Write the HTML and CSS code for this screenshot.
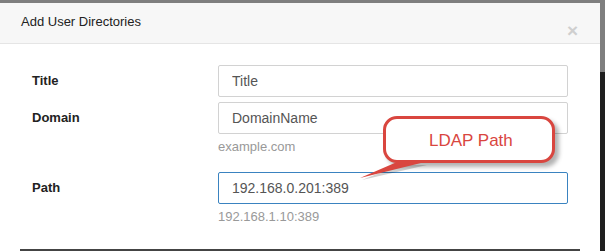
FILE: index.html
```html
<!DOCTYPE html>
<html lang="en">
<head>
  <meta charset="UTF-8">
  <title>Add User Directories</title>
  <link rel="stylesheet" href="styles.css">
</head>
<body>
  <!-- Modal dialog -->
  <div class="modal">
    <div class="modal-header">
      <h4 class="modal-title">Add User Directories</h4>
      <span class="close">&times;</span>
    </div>

    <div class="modal-body">
      <div class="form-row">
        <label class="form-label">Title</label>
        <div class="form-field">
          <input class="form-input" type="text" placeholder="Title">
        </div>
      </div>

      <div class="form-row">
        <label class="form-label">Domain</label>
        <div class="form-field">
          <input class="form-input" type="text" placeholder="DomainName">
          <span class="help">example.com</span>
        </div>
      </div>

      <div class="form-row path-row">
        <label class="form-label">Path</label>
        <div class="form-field">
          <input class="form-input focused" type="text" value="192.168.0.201:389">
          <span class="help">192.168.1.10:389</span>
        </div>
      </div>
    </div>

    <div class="modal-footer-line"></div>

    <!-- Annotation bubble over the form -->
    <div class="callout">LDAP Path</div>
    <svg class="callout-tail" width="80" height="26" viewBox="0 0 80 26">
      <polygon points="7,23 44,8 72,8" fill="rgba(0,0,0,0.18)" />
      <polygon points="5,21 42,5 70,5" fill="#d9463f" />
    </svg>
  </div>

  <!-- Backdrop strip on the right -->
  <div class="backdrop-side">
    <div class="side-top"></div>
    <div class="side-bottom"></div>
  </div>
</body>
</html>
```

FILE: styles.css
```css
* {
  margin: 0;
  padding: 0;
  box-sizing: border-box;
}

body {
  font-family: 'Liberation Sans', Arial, sans-serif;
  background: #7f7f7f;
  display: flex;
  height: 251px;
  overflow: hidden;
  color: #333;
}

/* Modal */
.modal {
  position: relative;
  width: 600px;
  margin-top: 3px;
  background: #fff;
  flex-shrink: 0;
}

.modal-header {
  height: 41px;
  display: flex;
  justify-content: space-between;
  padding: 0 22px 0 21px;
  background: #f7f7f7;
  border-bottom: 1px solid #e5e5e5;
}

.modal-title {
  font-size: 13px;
  font-weight: normal;
  color: #222;
  line-height: 40px;
  margin-top: -1px;
}

.close {
  font-size: 19px;
  font-weight: bold;
  color: #cfcfcf;
  line-height: 1;
  margin-top: 18px;
}

/* Form */
.modal-body {
  padding: 21px 0 0 32px;
  display: flex;
  flex-direction: column;
  gap: 5px;
}

.form-row {
  display: grid;
  grid-template-columns: 186px 350px;
  align-items: start;
}

.path-row {
  margin-top: 11px;
}

.form-label {
  font-size: 13px;
  font-weight: bold;
  color: #222;
  line-height: 32px;
}

.form-field {
  display: flex;
  flex-direction: column;
}

.form-input {
  height: 32px;
  width: 350px;
  padding: 0 13px;
  border: 1px solid #d2d2d2;
  border-radius: 2px;
  font-family: inherit;
  font-size: 14px;
  color: #555;
  outline: none;
}

.form-input::placeholder {
  color: #555;
}

.form-input.focused {
  border-color: #3a83c0;
}

.help {
  font-size: 13px;
  color: #999;
  line-height: 18px;
  margin-top: 4px;
}

.modal-footer-line {
  margin: 23px 20px 0;
  height: 2px;
  background: #444;
}

/* Annotation */
.callout {
  position: absolute;
  left: 383px;
  top: 113px;
  width: 172px;
  height: 47px;
  border: 3px solid #d9463f;
  border-radius: 14px;
  background: #fff;
  color: #d9463f;
  font-size: 17px;
  padding: 12px 0 0 43px;
  box-shadow: 4px 4px 4px rgba(0, 0, 0, 0.3);
}

.callout-tail {
  position: absolute;
  left: 355px;
  top: 154px;
}

/* Right strip of the backdrop */
.backdrop-side {
  flex: 1;
  display: flex;
  flex-direction: column;
}

.side-top {
  height: 72px;
  background: #7f7f7f;
}

.side-bottom {
  flex: 1;
  background: #1f1f1f;
}
```
